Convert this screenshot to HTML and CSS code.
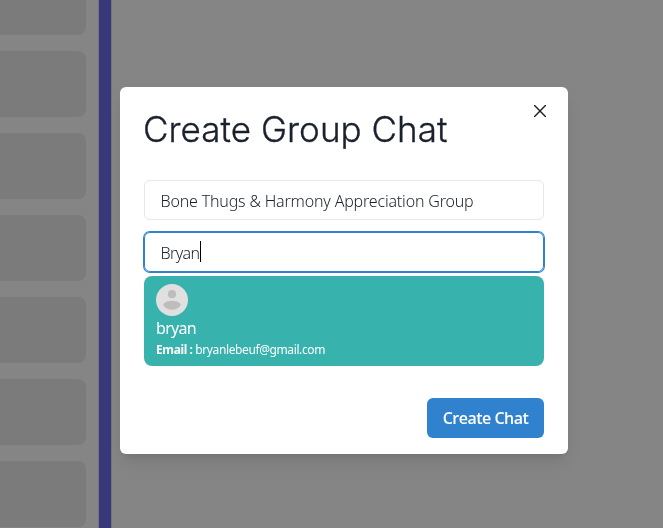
FILE: index.html
```
<!DOCTYPE html>
<html lang="en">
<head>
<meta charset="utf-8">
<title>Create Group Chat</title>
<link rel="stylesheet" href="styles.css">
</head>
<body>
<div class="page">
  <div class="chats">
    <div class="chat"></div><div class="chat"></div><div class="chat"></div><div class="chat"></div><div class="chat"></div><div class="chat"></div><div class="chat"></div>
  </div>
  <div class="divider"></div>
  <div class="room"></div>
</div>
<div class="overlay">
  <section class="modal" role="dialog">
    <header class="head">
      <h1 class="title">Create Group Chat</h1>
      <button class="close" aria-label="Close"><svg width="12" height="12" viewBox="0 0 12 12"><path d="M.6.6 11.4 11.4M11.4.6.6 11.4" fill="none" stroke="currentColor" stroke-width="1.4" stroke-linecap="round"/></svg></button>
    </header>
    <div class="field"><span class="name">Bone Thugs &amp; Harmony Appreciation Group</span></div>
    <div class="field focused"><span class="query">Bryan</span><span class="caret"></span></div>
    <div class="user">
      <svg class="avatar" width="32" height="32" viewBox="0 0 32 32"><circle cx="16" cy="16" r="16" fill="#e0e0e0"/><circle cx="16" cy="10.2" r="4.1" fill="#bdbdbd"/><path d="M7 20.8C8.500 17.900 12 16.800 16 16.800S23.500 17.900 25 20.800C23 24.100 20 25.800 16 25.800S9 24.100 7 20.800Z" fill="#bdbdbd"/></svg>
      <div class="user-name"><span>bryan</span></div>
      <div class="email"><b>Email :</b> <span>bryanlebeuf@gmail.com</span></div>
    </div>
    <footer class="foot"><button class="submit"><span>Create Chat</span></button></footer>
  </section>
</div>
</body>
</html>
```
FILE: styles.css
```
* { box-sizing: border-box; }
body { margin: 0; height: 528px; overflow: hidden; font-family: "Noto Sans", "Open Sans", sans-serif; color: #1a202c; }
.page { display: flex; height: 528px; background: #858585; overflow: hidden; }
.chats { width: 86px; display: flex; flex-direction: column; gap: 16px; margin-top: -31px; }
.chat { height: 66px; flex: none; background: #7b7b7b; border-radius: 0 8px 8px 0; }
.divider { width: 14px; margin-left: 12px; background: #38387a; border: solid #757575; border-width: 0 1px; }
.overlay { position: fixed; inset: 0; display: flex; align-items: flex-start; padding: 87px 0 0 120px; }
.modal { width: 448px; height: 367px; padding: 0 24px; background: #fff; border-radius: 6px; box-shadow: 0 10px 15px -3px rgba(0,0,0,.1), 0 4px 6px -2px rgba(0,0,0,.05); }
.head { height: 93px; display: flex; justify-content: space-between; }
.title { margin: 16px 0 0 -1px; font: 300 35px/53px Inter, sans-serif; letter-spacing: .05px; -webkit-text-stroke: .35px #1a202c; white-space: nowrap; }
.close { width: 32px; height: 32px; margin: 8px -12px 0 0; padding: 0; border: 0; background: none; color: #1a202c; display: flex; align-items: center; justify-content: center; }
.field { height: 40px; border: 1px solid #e2e8f0; border-radius: 6px; padding: 1px 16px 0 15.5px; display: flex; align-items: center; font-size: 16px; font-weight: 300; letter-spacing: -.18px; margin-bottom: 12px; white-space: nowrap; }
.query { letter-spacing: -.6px; }
.focused { border-color: #3182ce; box-shadow: 0 0 0 1px #3182ce; margin-bottom: 4px; }
.caret { width: 1px; height: 21px; margin-top: -2px; background: #000; }
.user { height: 90px; padding: 8px 12px; border-radius: 8px; background: #38b2ac; color: #fff; }
.avatar { display: block; }
.user-name { font-size: 16px; line-height: 25px; letter-spacing: -.7px; }
.email { font-size: 12px; line-height: 18px; letter-spacing: -.39px; white-space: nowrap; }
.foot { display: flex; justify-content: flex-end; padding-top: 32px; }
.submit { width: 117px; height: 40px; padding: 0; border: 0; border-radius: 6px; background: #3182ce; color: #fff; font: 600 16px/40px "Open Sans", "Noto Sans", sans-serif; letter-spacing: -.5px; white-space: nowrap; }
```
